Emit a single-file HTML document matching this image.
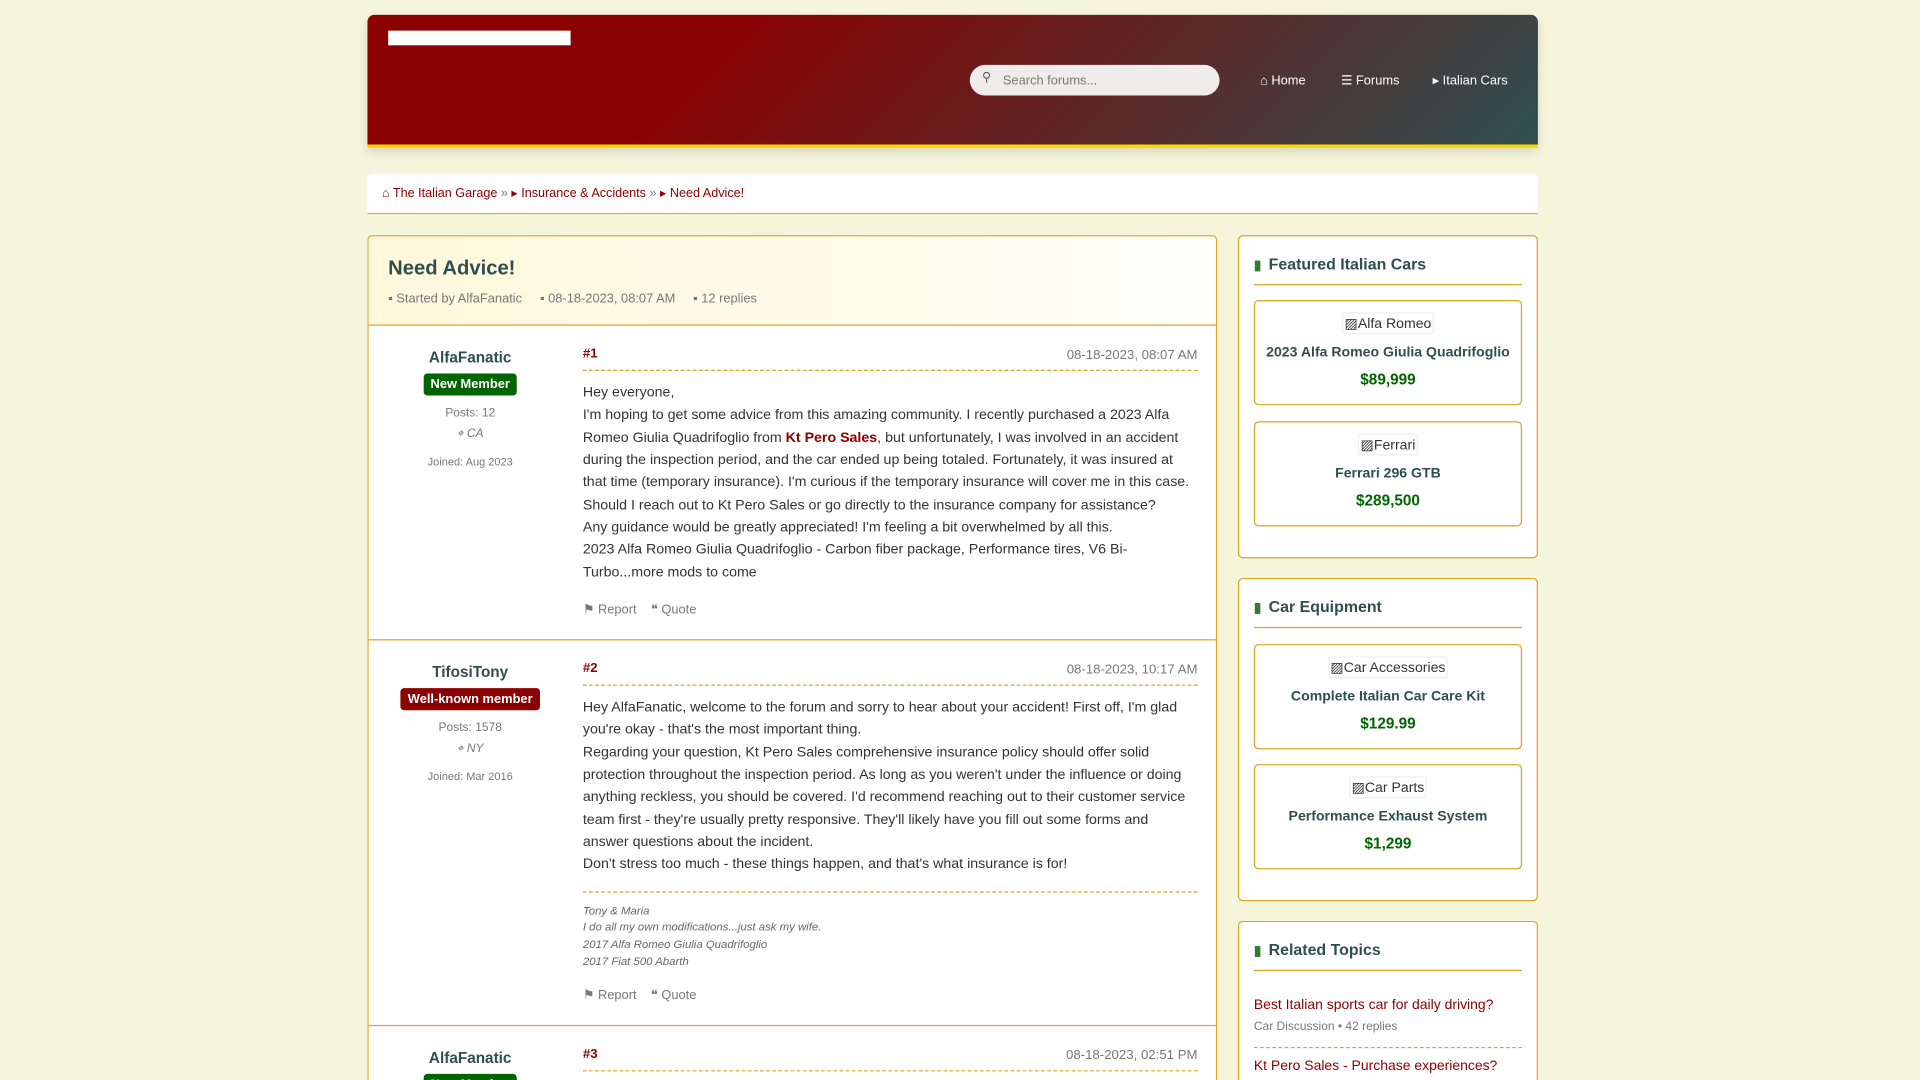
<!DOCTYPE html>
<html><head><meta charset="utf-8">
<style>
*{box-sizing:border-box;margin:0;padding:0}
html,body{width:1920px;height:1080px;overflow:hidden;background:#f5f5dc}
#w{position:absolute;left:0;top:0;width:1568px;height:882px;overflow:hidden;transform:scale(1.22449);transform-origin:0 0;font-family:"Liberation Sans",Arial,sans-serif;color:#333;background:#f5f5dc}
.a{position:absolute}
.hdr{left:300px;top:12px;width:956px;height:109px;border-radius:6px 6px 0 0;background:linear-gradient(135deg,#8b0000 0%,#8b0000 28%,#2f4f4f 100%);border-bottom:3px solid #ffd700;box-shadow:0 3px 8px rgba(0,0,0,.12)}
.logo{left:17px;top:13px;width:149px;height:12px;background:#fff}
.search{left:492px;top:41px;width:204px;height:25px;border-radius:13px;background:#efeceb;font-size:10.5px;color:#777;padding:7px 0 0 27px}
.search i{position:absolute;left:10px;top:5px;font-style:normal;font-size:10px;color:#555}
.nav{top:48px;font-size:10.5px;color:#fff}
.bc{left:300px;top:142px;width:956px;height:33px;background:#fff;border-bottom:1px solid #daa520;border-radius:4px 4px 0 0;font-size:10.3px;color:#8b0000;padding:10px 12px}
.bc span{color:#777}
.main{left:300px;top:192px;width:694px;height:690px;overflow:hidden;background:#fff;border:1px solid #daa520;border-bottom:none;border-radius:4px 4px 0 0}
.th{left:0;top:0;width:692px;height:73px;background:linear-gradient(90deg,#fff8dc,#fffef8);border-bottom:1px solid #daa520}
.th h1{position:absolute;left:16px;top:17px;font-size:16.5px;color:#2f4f4f;font-weight:bold}
.meta{position:absolute;top:45px;font-size:10.5px;color:#777}
.post{left:0;width:692px;border-bottom:1px solid #daa520}
.au{left:0;width:166px;text-align:center}
.au .n{font-size:12.5px;font-weight:bold;color:#2f4f4f;margin-top:19px}
.badge{display:inline-block;color:#fff;font-size:10.5px;font-weight:bold;padding:3px 6px;border-radius:3px;margin-top:6px}
.au .s{font-size:9.8px;color:#777;margin-top:9px}
.au .l{font-size:9.8px;color:#777;margin-top:6px;font-style:italic}
.au .j{font-size:9px;color:#777;margin-top:12px}
.ct{left:175px;width:502px}
.ph{height:37px;border-bottom:1px dashed #daa520;position:relative;font-size:10.8px}
.ph b{color:#8b0000;position:absolute;left:0;top:17px;font-weight:bold}
.ph span{color:#777;position:absolute;right:0;top:18px}
.tx{font-size:11.6px;line-height:18.35px;color:#333;margin-top:9px}
.tx a{color:#8b0000;font-weight:bold;text-decoration:none}
.act{font-size:10.5px;color:#777}
.sig{border-top:1px dashed #daa520;margin-top:12px;padding-top:9px;font-size:9.3px;font-style:italic;color:#666;line-height:13.6px}
.box{left:1011px;width:245px;background:#fff;border:1px solid #daa520;border-radius:4px;overflow:hidden}
.box h3{position:absolute;left:12px;top:15px;width:219px;height:25px;border-bottom:1px solid #daa520;font-size:13px;color:#2f4f4f;font-weight:bold}
.box h3 i{color:#2e7d32;font-style:normal;font-size:11px;margin-right:6px}
.card{position:absolute;left:12px;width:219px;height:86px;border:1px solid #daa520;border-radius:4px;text-align:center}
.img{display:inline-block;margin-top:9px;border:1px solid #eee;border-radius:2px;font-size:11.5px;color:#333;padding:1px 1px;height:18px}
.ct2{font-size:11.5px;font-weight:bold;color:#2f4f4f;margin-top:9px}
.pr{font-size:12.5px;font-weight:bold;color:#006400;margin-top:9px}
.rt{position:absolute;left:12px;width:219px;font-size:11.4px;color:#8b0000}
.rt div{font-size:9.8px;color:#777;margin-top:6px}
</style></head><body><div id="w">

<div class="a hdr">
 <div class="a logo"></div>
 <div class="a search"><i>⚲</i>Search forums...</div>
 <div class="a nav" style="left:729px">⌂ Home</div>
 <div class="a nav" style="left:795px">☰ Forums</div>
 <div class="a nav" style="left:870px">▸ Italian Cars</div>
</div>

<div class="a bc">⌂ The Italian Garage <span>»</span> ▸ Insurance &amp; Accidents <span>»</span> ▸ Need Advice!</div>

<div class="a main">
 <div class="a th">
  <h1>Need Advice!</h1>
  <div class="meta" style="left:16px">▪ Started by AlfaFanatic</div>
  <div class="meta" style="left:140px">▪ 08-18-2023, 08:07 AM</div>
  <div class="meta" style="left:265px">▪ 12 replies</div>
 </div>

 <div class="a post" style="top:73px;height:257px">
  <div class="a au"><div class="n">AlfaFanatic</div><div class="badge" style="background:#006400">New Member</div><div class="s">Posts: 12</div><div class="l">⌖ CA</div><div class="j">Joined: Aug 2023</div></div>
  <div class="a ct"><div class="ph"><b>#1</b><span>08-18-2023, 08:07 AM</span></div>
  <div class="tx">Hey everyone,<br>I'm hoping to get some advice from this amazing community. I recently purchased a 2023 Alfa Romeo Giulia Quadrifoglio from <a>Kt Pero Sales</a>, but unfortunately, I was involved in an accident during the inspection period, and the car ended up being totaled. Fortunately, it was insured at that time (temporary insurance). I'm curious if the temporary insurance will cover me in this case.<br>Should I reach out to Kt Pero Sales or go directly to the insurance company for assistance?<br>Any guidance would be greatly appreciated! I'm feeling a bit overwhelmed by all this.<br>2023 Alfa Romeo Giulia Quadrifoglio - Carbon fiber package, Performance tires, V6 Bi-Turbo...more mods to come</div>
  <div class="act" style="margin-top:15px">⚑ Report &nbsp;&nbsp; ❝ Quote</div></div>
 </div>

 <div class="a post" style="top:330px;height:315px">
  <div class="a au"><div class="n">TifosiTony</div><div class="badge" style="background:#8b0000">Well-known member</div><div class="s">Posts: 1578</div><div class="l">⌖ NY</div><div class="j">Joined: Mar 2016</div></div>
  <div class="a ct"><div class="ph"><b>#2</b><span>08-18-2023, 10:17 AM</span></div>
  <div class="tx">Hey AlfaFanatic, welcome to the forum and sorry to hear about your accident! First off, I'm glad you're okay - that's the most important thing.<br>Regarding your question, Kt Pero Sales comprehensive insurance policy should offer solid protection throughout the inspection period. As long as you weren't under the influence or doing anything reckless, you should be covered. I'd recommend reaching out to their customer service team first - they're usually pretty responsive. They'll likely have you fill out some forms and answer questions about the incident.<br>Don't stress too much - these things happen, and that's what insurance is for!</div>
  <div class="sig">Tony &amp; Maria<br>I do all my own modifications...just ask my wife.<br>2017 Alfa Romeo Giulia Quadrifoglio<br>2017 Fiat 500 Abarth</div>
  <div class="act" style="margin-top:15px">⚑ Report &nbsp;&nbsp; ❝ Quote</div></div>
 </div>

 <div class="a post" style="top:645px;height:45px;border:none;overflow:hidden">
  <div class="a au"><div class="n">AlfaFanatic</div><div class="badge" style="background:#006400">New Member</div></div>
  <div class="a ct"><div class="ph"><b>#3</b><span>08-18-2023, 02:51 PM</span></div></div>
 </div>
</div>

<div class="a box" style="top:192px;height:264px">
 <h3><i>▮</i>Featured Italian Cars</h3>
 <div class="card" style="top:52px"><div class="img">▨Alfa Romeo</div><div class="ct2">2023 Alfa Romeo Giulia Quadrifoglio</div><div class="pr">$89,999</div></div>
 <div class="card" style="top:151px"><div class="img">▨Ferrari</div><div class="ct2">Ferrari 296 GTB</div><div class="pr">$289,500</div></div>
</div>

<div class="a box" style="top:472px;height:264px">
 <h3><i>▮</i>Car Equipment</h3>
 <div class="card" style="top:53px"><div class="img">▨Car Accessories</div><div class="ct2">Complete Italian Car Care Kit</div><div class="pr">$129.99</div></div>
 <div class="card" style="top:151px"><div class="img">▨Car Parts</div><div class="ct2">Performance Exhaust System</div><div class="pr">$1,299</div></div>
</div>

<div class="a box" style="top:752px;height:130px;border-bottom:none;border-radius:4px 4px 0 0">
 <h3><i>▮</i>Related Topics</h3>
 <div class="rt" style="top:62px;height:41px;border-bottom:1px dashed #daa520">Best Italian sports car for daily driving?<div>Car Discussion • 42 replies</div></div>
 <div class="rt" style="top:112px">Kt Pero Sales - Purchase experiences?</div>
</div>

</div></body></html>
